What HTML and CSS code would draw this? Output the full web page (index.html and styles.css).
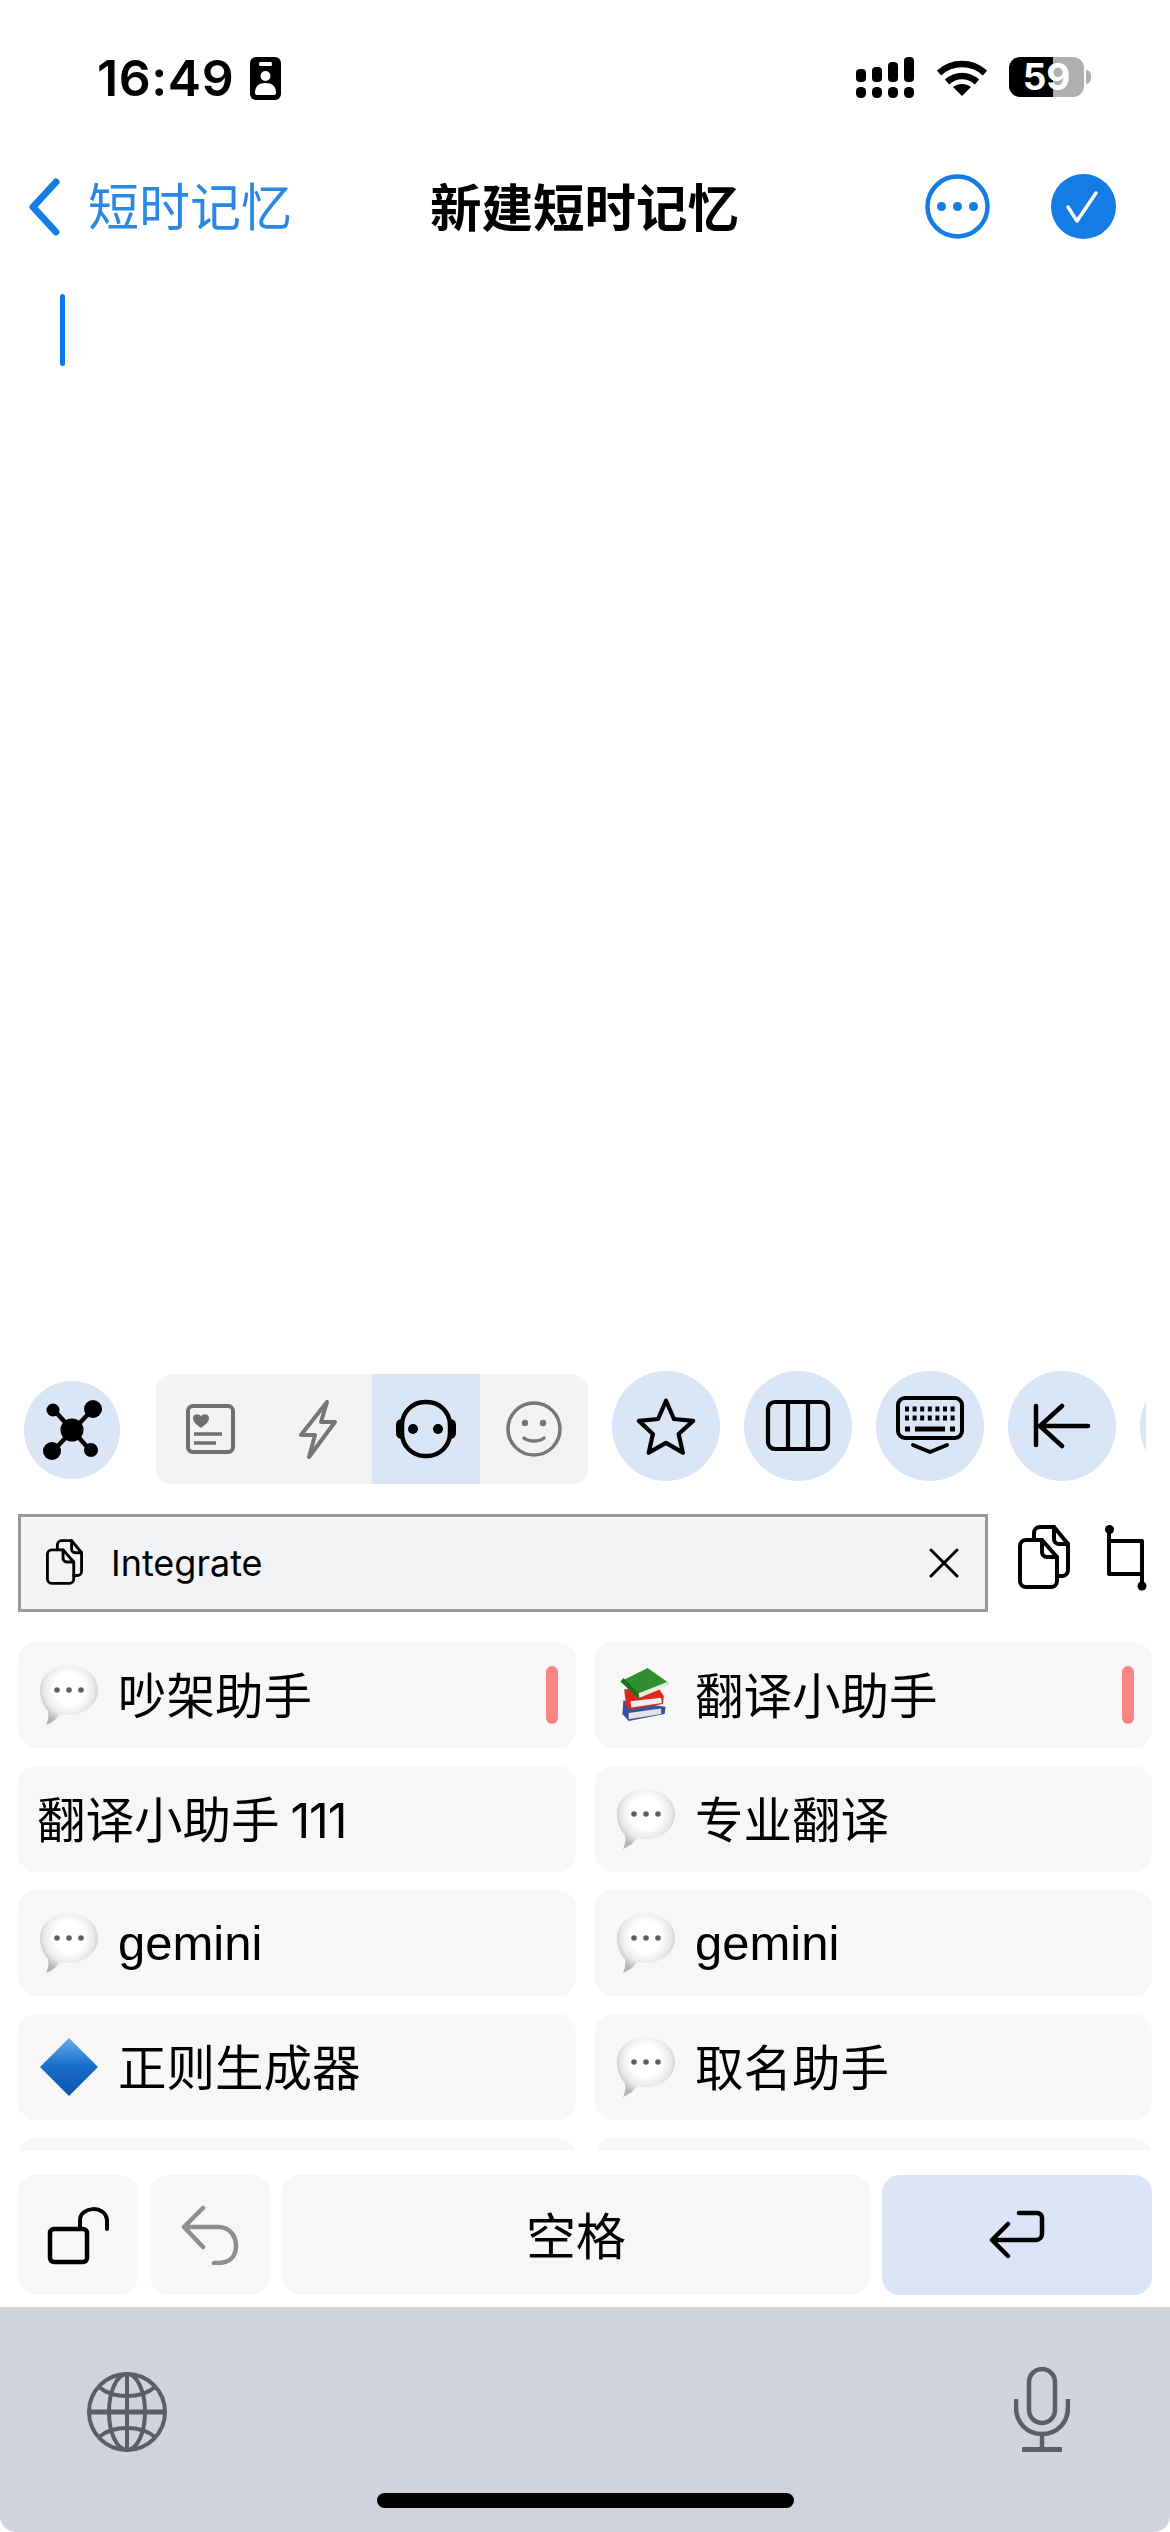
FILE: index.html
```html
<!DOCTYPE html>
<html lang="zh">
<head>
    <meta charset="utf-8">
    <title>新建短时记忆</title>
    <link rel="stylesheet" href="styles.css">
</head>
<body>
    <svg class="defs" width="0" height="0">
        <defs>
            <radialGradient id="bubble-fill" cx="50%" cy="40%" r="58%">
                <stop offset="0.45" stop-color="#ffffff"/>
                <stop offset="0.75" stop-color="#e9e9e9"/>
                <stop offset="1" stop-color="#b4b4b4"/>
            </radialGradient>
            <linearGradient id="diamond-fill" x1="0" y1="0" x2="0" y2="1">
                <stop offset="0" stop-color="#6ab0ea"/>
                <stop offset="0.45" stop-color="#1a70cc"/>
                <stop offset="1" stop-color="#0a55ad"/>
            </linearGradient>
            <symbol id="bubble" viewBox="0 0 58 60">
                <path d="M29 0c16 0 29 11 29 25S45 50 29 50c-3 0-6-.4-9-1.300C17 54 11 58 6 60c2-4 3-9 2-14C3 41 0 33 0 25 0 11 13 0 29 0z" fill="url(#bubble-fill)"/>
                <circle cx="17" cy="25" r="2.800" fill="#5f5f5f"/>
                <circle cx="29" cy="25" r="2.800" fill="#5f5f5f"/>
                <circle cx="41" cy="25" r="2.800" fill="#5f5f5f"/>
            </symbol>
            <symbol id="docs" viewBox="0 0 52 64">
                <g fill="none" stroke="currentColor" stroke-width="4" stroke-linecap="round" stroke-linejoin="round">
                    <path d="M8 15h16l15 17v24a6 6 0 0 1-6 6H8a6 6 0 0 1-6-6V21a6 6 0 0 1 6-6z"/>
                    <path d="M24 15v12a5 5 0 0 0 5 5h10"/>
                    <path d="M16 15V8a6 6 0 0 1 6-6h14l14 17v26a6 6 0 0 1-6 6h-5"/>
                    <path d="M36 2v12a5 5 0 0 0 5 5h9"/>
                </g>
            </symbol>
        </defs>
    </svg>

    <div class="page">
        <header class="status">
            <span class="time">16:49</span>
            <svg class="id-card" width="31" height="43" viewBox="0 0 31 43">
                <rect width="31" height="43" rx="6" fill="#000"/>
                <rect x="9" y="5" width="13" height="4" rx="1.500" fill="#fff"/>
                <circle cx="15.500" cy="19" r="5" fill="#fff"/>
                <path d="M5 36c0-7 4-10 10.500-10S26 29 26 36a2 2 0 0 1-2 2H7a2 2 0 0 1-2-2z" fill="#fff"/>
            </svg>
            <svg class="signal" width="58" height="41" viewBox="0 0 58 41">
                <g fill="#000">
                    <rect x="0" y="12" width="10" height="13" rx="4"/>
                    <rect x="16" y="10" width="10" height="15" rx="4"/>
                    <rect x="32" y="5" width="10" height="20" rx="4"/>
                    <rect x="48" y="0" width="10" height="25" rx="4"/>
                    <rect x="0" y="30" width="10" height="11" rx="4.500"/>
                    <rect x="16" y="30" width="10" height="11" rx="4.500"/>
                    <rect x="32" y="30" width="10" height="11" rx="4.500"/>
                    <rect x="48" y="30" width="10" height="11" rx="4.500"/>
                </g>
            </svg>
            <svg class="wifi" width="50" height="37" viewBox="0 0 50 37">
                <g fill="none" stroke="#000" stroke-width="6.500">
                    <path d="M2 14c13-12 33-12 46 0"/>
                    <path d="M10 23c9-8 21-8 30 0"/>
                </g>
                <path d="M16 28c5-4 13-4 18 0l-9 9z" fill="#000"/>
            </svg>
            <div class="battery">59</div>
            <div class="battery-tip"></div>
        </header>

        <nav class="nav">
            <a class="back">
                <svg class="back-icon" width="32" height="58" viewBox="0 0 32 58">
                    <path d="M28 4L5 29l23 25" fill="none" stroke="#147ce5" stroke-width="7" stroke-linecap="round" stroke-linejoin="round"/>
                </svg>
                <span class="nav-text">短时记忆</span>
            </a>
            <h1 class="title"><span class="nav-text">新建短时记忆</span></h1>
            <svg class="nav-more" width="65" height="65" viewBox="0 0 65 65">
                <circle cx="32.500" cy="32.500" r="30" fill="none" stroke="#147ce5" stroke-width="4.500"/>
                <circle cx="16.500" cy="32.500" r="4.500" fill="#147ce5"/>
                <circle cx="32.500" cy="32.500" r="4.500" fill="#147ce5"/>
                <circle cx="48.500" cy="32.500" r="4.500" fill="#147ce5"/>
            </svg>
            <svg class="nav-done" width="65" height="65" viewBox="0 0 65 65">
                <circle cx="32.500" cy="32.500" r="32.500" fill="#147ce5"/>
                <path d="M17 33l9 14 19-28" fill="none" stroke="#fff" stroke-width="3.500" stroke-linecap="round" stroke-linejoin="round"/>
            </svg>
        </nav>

        <main class="editor">
            <div class="cursor"></div>
        </main>

        <section class="toolbar">
            <div class="tool tool-first">
                <svg width="70" height="70" viewBox="0 0 70 70">
                    <g stroke="#000" stroke-width="4.500">
                        <line x1="17" y1="15" x2="53" y2="55"/>
                        <line x1="56" y1="14" x2="16" y2="56"/>
                    </g>
                    <circle cx="35" cy="35" r="11.500"/>
                    <circle cx="16" cy="15" r="6.500"/>
                    <circle cx="56" cy="14" r="9"/>
                    <circle cx="15" cy="56" r="9"/>
                    <circle cx="54" cy="55" r="7"/>
                </svg>
            </div>
            <div class="segment">
                <div class="seg-item">
                    <svg width="52" height="54" viewBox="0 0 52 54">
                        <rect x="4" y="4" width="45" height="46" rx="5" fill="none" stroke="#6f6f6f" stroke-width="4"/>
                        <path d="M17 26c-4-3-8-6-8-10 0-4 6-5 8-1.500 2-3.500 8-2.500 8 1.500 0 4-4 7-8 10z" fill="#6f6f6f"/>
                        <path d="M10 32h28M10 41h22" stroke="#6f6f6f" stroke-width="3.500" fill="none"/>
                    </svg>
                </div>
                <div class="seg-item">
                    <svg width="40" height="62" viewBox="0 0 40 62">
                        <path d="M29 4L3 37h14l-6 22 26-35H23z" fill="none" stroke="#767676" stroke-width="4" stroke-linejoin="round"/>
                    </svg>
                </div>
                <div class="seg-item seg-active">
                    <svg width="62" height="60" viewBox="0 0 62 60">
                        <rect x="7" y="3" width="48" height="54" rx="23" fill="none" stroke="#000" stroke-width="4.500"/>
                        <path d="M6 20a6 6 0 0 0-5 6v8a6 6 0 0 0 5 6zM56 20a6 6 0 0 1 5 6v8a6 6 0 0 1-5 6z" fill="#000"/>
                        <circle cx="18" cy="30" r="5"/>
                        <circle cx="43" cy="30" r="5"/>
                    </svg>
                </div>
                <div class="seg-item">
                    <svg width="56" height="56" viewBox="0 0 56 56">
                        <circle cx="28" cy="28" r="26" fill="none" stroke="#777" stroke-width="3.500"/>
                        <circle cx="19" cy="22" r="3.200" fill="#777"/>
                        <circle cx="37" cy="22" r="3.200" fill="#777"/>
                        <path d="M18 37c5 4 15 4 20 0" fill="none" stroke="#777" stroke-width="3.500" stroke-linecap="round"/>
                    </svg>
                </div>
            </div>
            <div class="tool">
                <svg width="60" height="58" viewBox="0 0 64 62">
                    <path d="M32 4l8.500 19.500 20.500 2-15.500 14 4.500 20L32 49 13.500 59.500l4.500-20L3 25.500l20.500-2z" fill="none" stroke="#000" stroke-width="4.500" stroke-linejoin="round"/>
                </svg>
            </div>
            <div class="tool">
                <svg width="66" height="54" viewBox="0 0 66 54">
                    <rect x="3" y="3" width="60" height="47" rx="7" fill="none" stroke="#000" stroke-width="4.200"/>
                    <path d="M23 3v47M43 3v47" stroke="#000" stroke-width="4.200"/>
                </svg>
            </div>
            <div class="tool">
                <svg width="70" height="60" viewBox="0 0 70 60">
                    <rect x="3" y="2" width="64" height="40" rx="7" fill="none" stroke="#000" stroke-width="4"/>
                    <path d="M10 13h50M10 22h50" stroke="#000" stroke-width="5" stroke-dasharray="4 3.600" fill="none"/>
                    <path d="M10 33h5M55 33h5" stroke="#000" stroke-width="5" fill="none"/>
                    <path d="M20 33h30" stroke="#000" stroke-width="5" fill="none"/>
                    <path d="M18 49l17 7 17-7" fill="none" stroke="#000" stroke-width="4" stroke-linecap="round" stroke-linejoin="round"/>
                </svg>
            </div>
            <div class="tool">
                <svg width="60" height="46" viewBox="0 0 60 46">
                    <path d="M4 3v39M30 3L8 23l22 20M8 23h48" fill="none" stroke="#000" stroke-width="4.500" stroke-linecap="round" stroke-linejoin="round"/>
                </svg>
            </div>
            <div class="tool"></div>
        </section>

        <section class="clip-row">
            <div class="clip-box">
                <svg class="clip-icon" width="37" height="46"><use href="#docs"/></svg>
                <span class="clip-text">Integrate</span>
                <svg class="clip-close" width="30" height="30" viewBox="0 0 30 30">
                    <path d="M2 2l26 26M28 2L2 28" stroke="#000" stroke-width="3" stroke-linecap="round"/>
                </svg>
            </div>
            <svg class="clip-copy" width="52" height="64"><use href="#docs"/></svg>
            <svg class="clip-crop" width="42" height="66" viewBox="0 0 42 66">
                <path d="M4 4v45h33V16H4" fill="none" stroke="#000" stroke-width="4" stroke-linejoin="round"/>
                <path d="M37 49v12" stroke="#000" stroke-width="4"/>
                <circle cx="4.500" cy="4.500" r="4.500"/>
                <circle cx="37" cy="61" r="4.500"/>
            </svg>
        </section>

        <section class="grid">
            <div class="card">
                <svg class="emoji" width="58" height="60"><use href="#bubble"/></svg>
                <span>吵架助手</span>
                <i class="mark"></i>
            </div>
            <div class="card">
                <svg class="emoji" width="54" height="54" viewBox="0 0 58 60">
                    <path d="M6 36l-1 15 7 8 40-8 1-8z" fill="#3d4f9f"/>
                    <path d="M12 50l36-5v6l-36 6z" fill="#e4e4e4"/>
                    <path d="M7 24l2 17 5 5 36-6 1-9-8-12z" fill="#d8291c"/>
                    <path d="M14 37l34-4 1 6-34 5z" fill="#efefef"/>
                    <path d="M3 15L33 0l24 17-34 17z" fill="#2f8f2f"/>
                    <path d="M3 15l20 19v-6L6 11z" fill="#1f6f23"/>
                    <path d="M23 28l33-13v5L24 33z" fill="#e9e9e2"/>
                </svg>
                <span class="after-books">翻译小助手</span>
                <i class="mark"></i>
            </div>
            <div class="card card-plain"><span>翻译小助手 <b class="digits">111</b></span></div>
            <div class="card">
                <svg class="emoji" width="58" height="60"><use href="#bubble"/></svg>
                <span>专业翻译</span>
            </div>
            <div class="card">
                <svg class="emoji" width="58" height="60"><use href="#bubble"/></svg>
                <span class="latin">gemini</span>
            </div>
            <div class="card">
                <svg class="emoji" width="58" height="60"><use href="#bubble"/></svg>
                <span class="latin">gemini</span>
            </div>
            <div class="card">
                <svg class="emoji" width="58" height="60" viewBox="0 0 58 60">
                    <path d="M29 1l29 29-29 29L0 30z" fill="url(#diamond-fill)"/>
                </svg>
                <span>正则生成器</span>
            </div>
            <div class="card">
                <svg class="emoji" width="58" height="60"><use href="#bubble"/></svg>
                <span>取名助手</span>
            </div>
            <div class="card"></div>
            <div class="card"></div>
        </section>

        <section class="keys">
            <div class="key key-small">
                <svg width="62" height="60" viewBox="0 0 62 60">
                    <rect x="3" y="24" width="37" height="33" rx="4" fill="none" stroke="#000" stroke-width="4.500"/>
                    <path d="M33 22V15C33 2 58 -1 60 15v9" fill="none" stroke="#000" stroke-width="4" stroke-linecap="round"/>
                </svg>
            </div>
            <div class="key key-small">
                <svg width="60" height="60" viewBox="0 0 60 60">
                    <path d="M23 3L4 22l19 20M4 22h34c11 0 18 8 18 19s-7 17-18 17h-4" fill="none" stroke="#8e8e93" stroke-width="4.500" stroke-linecap="round" stroke-linejoin="round"/>
                </svg>
            </div>
            <div class="key key-space"><span>空格</span></div>
            <div class="key key-return">
                <svg width="56" height="50" viewBox="0 0 56 50">
                    <path d="M19 14L3 30l16 16M3 30h44a6 6 0 0 0 6-6V8a5 5 0 0 0-5-5H30" fill="none" stroke="#000" stroke-width="4.500" stroke-linecap="round" stroke-linejoin="round"/>
                </svg>
            </div>
        </section>

        <footer class="keyboard">
            <div class="keyboard-icons">
                <svg width="80" height="82" viewBox="0 0 80 82">
                    <g fill="none" stroke="#5b5e68" stroke-width="4">
                        <circle cx="40" cy="41" r="38"/>
                        <ellipse cx="40" cy="41" rx="18" ry="38"/>
                        <path d="M40 3v76"/>
                        <path d="M2 41h76" stroke-width="5"/>
                        <path d="M12 16c14 12 42 12 56 0M12 66c14-12 42-12 56 0"/>
                    </g>
                </svg>
                <svg class="mic" width="56" height="86" viewBox="0 0 56 86">
                    <g fill="none" stroke="#5b5e68" stroke-width="4.500">
                        <rect x="15" y="2" width="26" height="54" rx="13"/>
                        <path d="M2 32v8c0 16 11 27 26 27s26-11 26-27v-8"/>
                        <path d="M28 67v14"/>
                    </g>
                    <rect x="8" y="80" width="40" height="5" rx="1" fill="#5b5e68"/>
                </svg>
            </div>
            <div class="home-bar"></div>
        </footer>
    </div>
</body>
</html>
```

FILE: styles.css
```css
* {
    box-sizing: border-box;
}
body {
    margin: 0;
    background: #fff;
    font-family: "Inter", "Noto Sans CJK SC", sans-serif;
    color: #000;
}
.defs {
    display: block;
    height: 0;
}
.page {
    width: 1170px;
    height: 2532px;
    display: flex;
    flex-direction: column;
    overflow: hidden;
}

/* status bar */
.status {
    height: 174px;
    display: flex;
    align-items: flex-start;
    padding: 57px 0 0 97px;
    flex-shrink: 0;
}
.time {
    width: 153px;
    font-size: 50px;
    font-weight: 600;
    letter-spacing: 0.6px;
    line-height: 43px;
}
.signal {
    margin-left: 575px;
}
.wifi {
    margin: 2px 0 0 23px;
}
.battery {
    width: 75px;
    height: 40px;
    margin-left: 22px;
    border-radius: 11px;
    background: linear-gradient(90deg, #000 44px, #b0b0b0 44px);
    color: #fff;
    font-family: "Inter", sans-serif;
    font-size: 37px;
    font-weight: 700;
    line-height: 40px;
    text-align: center;
}
.battery-tip {
    width: 5px;
    height: 14px;
    margin: 13px 0 0 2px;
    border-radius: 0 7px 7px 0;
    background: #b0b0b0;
}

/* nav */
.nav {
    height: 65px;
    display: flex;
    align-items: center;
    padding-left: 28px;
    flex-shrink: 0;
}
.back {
    display: flex;
    align-items: center;
    gap: 28px;
    color: #2a88e4;
    font-family: "Noto Sans CJK SC", sans-serif;
    font-size: 51px;
    font-weight: 400;
    white-space: nowrap;
}
.back-icon {
    flex-shrink: 0;
}
.nav-text {
    display: block;
    margin-bottom: 5px;
}
.title {
    margin: 0 0 0 138px;
    font-family: "Noto Sans CJK SC", sans-serif;
    font-size: 51.500px;
    font-weight: 700;
    white-space: nowrap;
}
.nav-more {
    margin-left: auto;
}
.nav-done {
    margin: 0 54px 0 61px;
}

.editor {
    flex: 1;
    padding: 55px 0 0 60px;
}
.cursor {
    width: 5px;
    height: 72px;
    border-radius: 3px;
    background: #0a78f0;
}

/* toolbar */
.toolbar {
    width: 1146px;
    height: 114px;
    display: flex;
    align-items: flex-start;
    gap: 24px;
    padding-left: 24px;
    overflow: hidden;
    flex-shrink: 0;
}
.tool {
    width: 108px;
    height: 110px;
    flex-shrink: 0;
    display: flex;
    align-items: center;
    justify-content: center;
    border-radius: 50%;
    background: #dae5f5;
}
.tool-first {
    width: 96px;
    height: 98px;
    margin: 10px 12px 0 0;
}
.segment {
    width: 432px;
    height: 110px;
    margin-top: 3px;
    flex-shrink: 0;
    display: flex;
    border-radius: 16px;
    background: #f2f3f5;
    overflow: hidden;
}
.seg-item {
    width: 108px;
    display: flex;
    align-items: center;
    justify-content: center;
}
.seg-active {
    background: #dae5f5;
}

/* clipboard row */
.clip-row {
    display: flex;
    align-items: flex-start;
    margin-top: 29px;
    padding-left: 18px;
    flex-shrink: 0;
}
.clip-box {
    width: 970px;
    height: 98px;
    display: flex;
    align-items: center;
    padding: 0 26px 0 25px;
    border: 3px solid #999;
    background: #f2f3f5;
}
.clip-icon {
    color: #000;
    margin-top: -2px;
}
.clip-text {
    margin-left: 28px;
    font-size: 36px;
}
.clip-close {
    margin-left: auto;
}
.clip-copy {
    margin: 11px 0 0 30px;
}
.clip-crop {
    margin: 11px 0 0 35px;
}

/* assistant list */
.grid {
    height: 509px;
    margin-top: 30px;
    padding: 0 18px;
    display: grid;
    grid-template-columns: 558px 557px;
    grid-auto-rows: 106px;
    gap: 18px 19px;
    overflow: hidden;
    flex-shrink: 0;
}
.card {
    display: flex;
    align-items: center;
    gap: 20px;
    padding: 0 18px 0 22px;
    border-radius: 18px;
    background: #f7f7f7;
    font-family: "Noto Sans CJK SC", sans-serif;
    font-size: 48.500px;
    white-space: nowrap;
}
.card span {
    margin-bottom: 5px;
}
.card-plain {
    padding-left: 19px;
}
.digits {
    font-family: "Inter", sans-serif;
    font-weight: 400;
    letter-spacing: -1px;
}
.card .latin {
    margin-bottom: 0;
    font-family: "Liberation Sans", sans-serif;
    font-size: 49px;
}
.emoji {
    flex-shrink: 0;
}
.after-books {
    margin-left: 4px;
}
.mark {
    width: 12px;
    height: 58px;
    margin-left: auto;
    border-radius: 6px;
    background: #fb8583;
}

/* bottom keys */
.keys {
    height: 120px;
    margin-top: 24px;
    padding: 0 18px;
    display: flex;
    gap: 12px;
    flex-shrink: 0;
}
.key {
    display: flex;
    align-items: center;
    justify-content: center;
    border-radius: 18px;
    background: #f7f7f7;
}
.key-small {
    width: 120px;
}
.key-space {
    width: 588px;
    font-family: "Noto Sans CJK SC", sans-serif;
    font-size: 50px;
}
.key-space span {
    margin-bottom: 5px;
}
.key-return {
    width: 270px;
    background: #dbe5f6;
}

/* system keyboard strip */
.keyboard {
    height: 225px;
    margin-top: 12px;
    padding-top: 60px;
    background: #d0d3dc;
    border-radius: 0 0 16px 16px;
    flex-shrink: 0;
}
.keyboard-icons {
    display: flex;
    justify-content: space-between;
    align-items: flex-start;
    padding: 4px 100px 0 87px;
}
.mic {
    margin-top: -4px;
}
.home-bar {
    width: 417px;
    height: 15px;
    margin: 40px auto 0;
    border-radius: 8px;
    background: #000;
}
```
